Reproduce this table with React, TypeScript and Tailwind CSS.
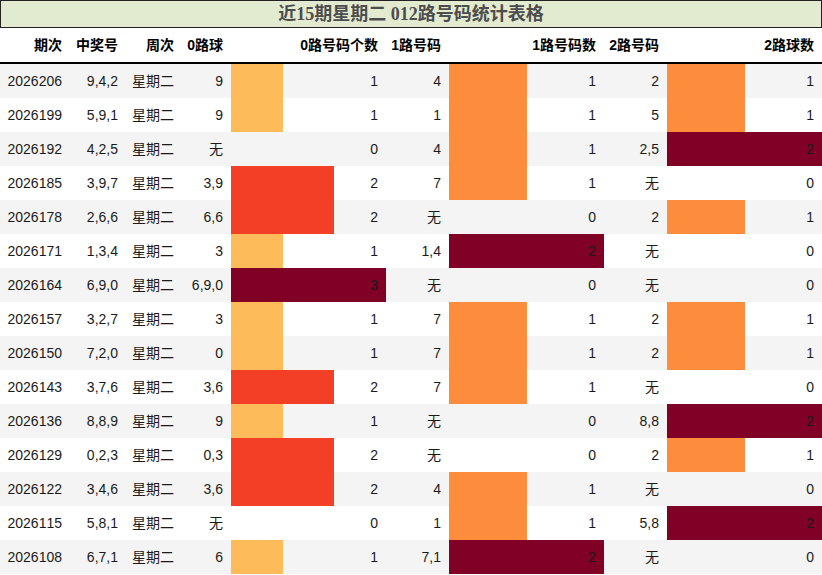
type Row = {
  qi: string;
  hao: string;
  r0: string;
  c0: number;
  r1: string;
  c1: number;
  r2: string;
  c2: number;
};

const rows: Row[] = [
  { qi: "2026206", hao: "9,4,2", r0: "9", c0: 1, r1: "4", c1: 1, r2: "2", c2: 1 },
  { qi: "2026199", hao: "5,9,1", r0: "9", c0: 1, r1: "1", c1: 1, r2: "5", c2: 1 },
  { qi: "2026192", hao: "4,2,5", r0: "无", c0: 0, r1: "4", c1: 1, r2: "2,5", c2: 2 },
  { qi: "2026185", hao: "3,9,7", r0: "3,9", c0: 2, r1: "7", c1: 1, r2: "无", c2: 0 },
  { qi: "2026178", hao: "2,6,6", r0: "6,6", c0: 2, r1: "无", c1: 0, r2: "2", c2: 1 },
  { qi: "2026171", hao: "1,3,4", r0: "3", c0: 1, r1: "1,4", c1: 2, r2: "无", c2: 0 },
  { qi: "2026164", hao: "6,9,0", r0: "6,9,0", c0: 3, r1: "无", c1: 0, r2: "无", c2: 0 },
  { qi: "2026157", hao: "3,2,7", r0: "3", c0: 1, r1: "7", c1: 1, r2: "2", c2: 1 },
  { qi: "2026150", hao: "7,2,0", r0: "0", c0: 1, r1: "7", c1: 1, r2: "2", c2: 1 },
  { qi: "2026143", hao: "3,7,6", r0: "3,6", c0: 2, r1: "7", c1: 1, r2: "无", c2: 0 },
  { qi: "2026136", hao: "8,8,9", r0: "9", c0: 1, r1: "无", c1: 0, r2: "8,8", c2: 2 },
  { qi: "2026129", hao: "0,2,3", r0: "0,3", c0: 2, r1: "无", c1: 0, r2: "2", c2: 1 },
  { qi: "2026122", hao: "3,4,6", r0: "3,6", c0: 2, r1: "4", c1: 1, r2: "无", c2: 0 },
  { qi: "2026115", hao: "5,8,1", r0: "无", c0: 0, r1: "1", c1: 1, r2: "5,8", c2: 2 },
  { qi: "2026108", hao: "6,7,1", r0: "6", c0: 1, r1: "7,1", c1: 2, r2: "无", c2: 0 },
];

const cols = "grid grid-cols-[70px_56px_56px_49px_155px_63px_155px_63px_155px]";

function barColor(v: number, max: number) {
  if (v === max) return "#800026";
  if (max === 3) return v === 1 ? "#febb59" : "#f43f27";
  return "#fd8d3c";
}

function BarCell({ v, max }: { v: number; max: number }) {
  return (
    <div className="relative h-[34px]">
      {v > 0 && (
        <div
          className="absolute left-0 top-0 h-full"
          style={{ width: `${(v / max) * 100}%`, background: barColor(v, max) }}
        />
      )}
      <span className="relative flex h-full items-center justify-end pr-2">{v}</span>
    </div>
  );
}

function Cell({ children }: { children: React.ReactNode }) {
  return <div className="flex h-[34px] items-center justify-end pr-2">{children}</div>;
}

export default function App() {
  return (
    <div
      className="w-[822px] h-[575px] bg-white text-[14px] text-[#1a1a1a] [font-kerning:none]"
      style={{ fontFamily: '"Liberation Sans", "Noto Sans CJK SC", sans-serif' }}
    >
      <div
        className="h-[28px] border border-[#222] bg-[#e2ebd0] flex items-center justify-center text-[18px] font-bold text-[#4d4d4d]"
        style={{ fontFamily: '"Liberation Serif", "Noto Sans CJK SC", serif' }}
      >
        近15期星期二 012路号码统计表格
      </div>
      <div className={`${cols} h-[36px] border-b-2 border-black font-bold text-black`}>
        <Cell>期次</Cell>
        <Cell>中奖号</Cell>
        <Cell>周次</Cell>
        <Cell>0路球</Cell>
        <Cell>0路号码个数</Cell>
        <Cell>1路号码</Cell>
        <Cell>1路号码数</Cell>
        <Cell>2路号码</Cell>
        <Cell>2路球数</Cell>
      </div>
      {rows.map((r, i) => (
        <div key={r.qi} className={`${cols} ${i % 2 === 0 ? "bg-[#f4f4f4]" : "bg-white"}`}>
          <Cell>{r.qi}</Cell>
          <Cell>{r.hao}</Cell>
          <Cell>星期二</Cell>
          <Cell>{r.r0}</Cell>
          <BarCell v={r.c0} max={3} />
          <Cell>{r.r1}</Cell>
          <BarCell v={r.c1} max={2} />
          <Cell>{r.r2}</Cell>
          <BarCell v={r.c2} max={2} />
        </div>
      ))}
    </div>
  );
}
